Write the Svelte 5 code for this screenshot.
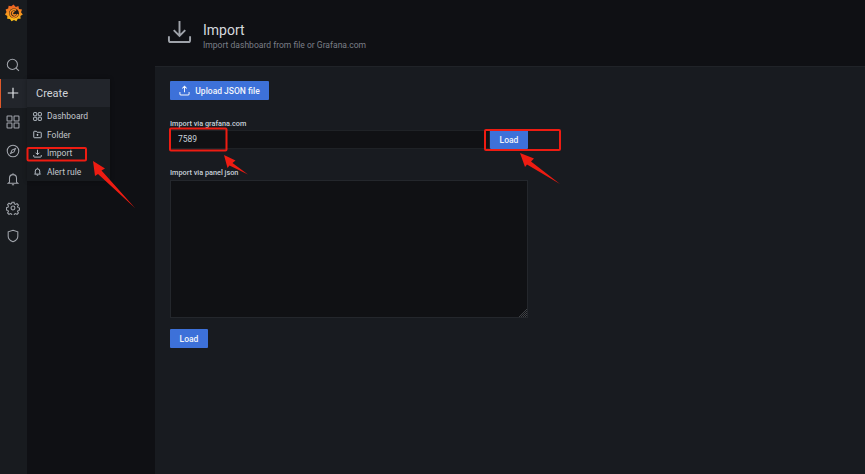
<script lang="ts">
	const menu = [
		{ label: 'Dashboard', icon: 'grid' },
		{ label: 'Folder', icon: 'folder' },
		{ label: 'Import', icon: 'import' },
		{ label: 'Alert rule', icon: 'bell' }
	];
</script>

<div class="app">
	<nav class="sidebar">
		<div class="logo">
			<svg width="18" height="18" viewBox="0 0 18 18">
				<defs>
					<linearGradient id="flame" x1="0" y1="1" x2="0" y2="0">
						<stop offset="0" stop-color="#fcc419" />
						<stop offset="1" stop-color="#ee5a24" />
					</linearGradient>
				</defs>
				<path
					fill="url(#flame)"
					d="M8.500.5 10.800 3l2.600-1 .6 2.900 3 .6-1 2.700 1.800 2.200-2.400 1.500.2 2.800-2.800.1-1.400 2.500-2.400-1.300-2.500 1.300-1.500-2.400-2.800-.2.100-2.700L0 10.500l1.500-2.400L.6 5.500l2.600-1 .4-2.800 2.700.6z"
				/>
				<circle cx="9" cy="9.300" r="4.900" fill="#1d1a1a" />
				<path
					d="M12.700 10a3.800 3.800 0 1 1-1.500-3.700M10.700 10.200a1.800 1.800 0 1 1-1.200-2.700"
					fill="none"
					stroke="#f68b1f"
					stroke-width="1.500"
				/>
			</svg>
		</div>
		<div class="nav-icons">
			<div class="nav-item">
				<svg class="ic" viewBox="0 0 16 16"><circle cx="7.300" cy="7.300" r="5.800" /><path d="m11.500 11.500 3.300 3.300" /></svg>
			</div>
			<div class="nav-item active">
				<svg class="ic plus" viewBox="0 0 16 16"><path d="M8 2v12M2 8h12" /></svg>
			</div>
			<div class="nav-item">
				<svg class="ic" viewBox="0 0 16 16">
					<rect x="1.200" y="1.200" width="5.600" height="5.600" rx=".6" />
					<rect x="9.200" y="1.200" width="5.600" height="5.600" rx=".6" />
					<rect x="1.200" y="9.200" width="5.600" height="5.600" rx=".6" />
					<rect x="9.200" y="9.200" width="5.600" height="5.600" rx=".6" />
				</svg>
			</div>
			<div class="nav-item">
				<svg class="ic" viewBox="0 0 16 16"><circle cx="8" cy="8" r="6.600" /><path d="m10.800 5.200-1.700 3.900-3.900 1.700 1.700-3.900z" /></svg>
			</div>
			<div class="nav-item">
				<svg class="ic" viewBox="0 0 16 16"><path d="M4 11.500V7a4 4 0 0 1 8 0v4.500l1.500 1.300h-11zM6.700 14.500h2.600M8 1.500V3" /></svg>
			</div>
			<div class="nav-item">
				<svg class="ic" viewBox="0 0 16 16">
					<circle cx="8" cy="8" r="2.200" />
					<path d="M6.800 1.500h2.400l.4 1.900 1.300.6 1.700-1 1.600 1.700-1 1.600.6 1.300 1.700.4v2.300l-1.700.4-.6 1.300 1 1.600-1.600 1.700-1.700-1-1.300.6-.4 1.600H6.800l-.4-1.600-1.300-.6-1.700 1-1.600-1.700 1-1.600-.6-1.300-1.700-.4V7.500l1.700-.4.6-1.300-1-1.600 1.600-1.700 1.700 1 1.300-.6z" />
				</svg>
			</div>
			<div class="nav-item">
				<svg class="ic" viewBox="0 0 16 16"><path d="M8 1.500 13.500 3.200v5c0 3-2.500 5.200-5.500 6.300-3-1.100-5.500-3.300-5.500-6.300v-5z" /></svg>
			</div>
		</div>
	</nav>

	<div class="main">
		<header class="page-header">
			<svg class="header-icon" viewBox="0 0 26 26">
				<path d="M13 2v15M7 11.500l6 6 6-6M2 18v4a2 2 0 0 0 2 2h18a2 2 0 0 0 2-2v-4" />
			</svg>
			<div>
				<h1>Import</h1>
				<p>Import dashboard from file or Grafana.com</p>
			</div>
		</header>

		<section class="content">
			<button class="btn upload">
				<svg width="11" height="11" viewBox="0 0 12 12"><path d="M6 8V1.500M3.500 3.800 6 1.300l2.500 2.500M1 7.500v2.300a1 1 0 0 0 1 1h8a1 1 0 0 0 1-1V7.500" /></svg>
				Upload JSON file
			</button>

			<div class="label first">Import via grafana.com</div>
			<div class="row">
				<div class="input">7589</div>
				<button class="btn">Load</button>
			</div>

			<div class="label second">Import via panel json</div>
			<div class="textarea">
				<svg class="grip" width="9" height="9" viewBox="0 0 9 9"><path d="M9 1 1 9M9 3 3 9M9 5 5 9M9 7 7 9" /></svg>
			</div>

			<button class="btn last">Load</button>
		</section>
	</div>

	<div class="flyout">
		<div class="flyout-title">Create</div>
		<ul>
			{#each menu as item}
				<li>
					<svg class="mi" viewBox="0 0 12 12">
						{#if item.icon === 'grid'}
							<rect x=".8" y=".8" width="4.200" height="4.200" rx=".8" />
							<rect x="7" y=".8" width="4.200" height="4.200" rx=".8" />
							<rect x=".8" y="7" width="4.200" height="4.200" rx=".8" />
							<rect x="7" y="7" width="4.200" height="4.200" rx=".8" />
						{:else if item.icon === 'folder'}
							<path d="M1 2.500a.8.800 0 0 1 .8-.8h2.700l1 1.300h4.700a.8.800 0 0 1 .8.800v5.700a.8.800 0 0 1-.8.800H1.800a.8.800 0 0 1-.8-.8z" />
							<path d="M6 5.200v2.600M4.700 6.500h2.600" />
						{:else if item.icon === 'import'}
							<path d="M6 1v6.500M3.500 5 6 7.500 8.500 5M1 8v1.800a1 1 0 0 0 1 1h8a1 1 0 0 0 1-1V8" />
						{:else}
							<path d="M3 8.500V5.500a3 3 0 0 1 6 0v3l1 1H2zM5 11h2M6 1v1" />
						{/if}
					</svg>
					{item.label}
				</li>
			{/each}
		</ul>
	</div>

	<!-- screenshot annotations -->
	<svg class="marks" width="865" height="474" viewBox="0 0 865 474">
		<g fill="none" stroke="#ee1c12" stroke-width="2">
			<rect x="27.500" y="148" width="58.500" height="12.500" rx="1" />
			<rect x="170" y="128.500" width="56.500" height="22" rx="1" />
			<rect x="485" y="130" width="75" height="20" rx="1" />
		</g>
		<g fill="#ee1c12">
			<path d="M93 161 105 168.500 101.500 170.500 135 208 98 174 95 176z" />
			<path d="M224 155 235.500 160.500 232.500 163 248 174.500 229.500 165.500 227.500 168z" />
			<path d="M520 153 534 158.500 531 161.500 560 184 527 164.500 525 167z" />
		</g>
	</svg>
</div>

<style>
	:global(body) {
		margin: 0;
		background: #0f1014;
	}

	.app {
		position: relative;
		display: flex;
		width: 865px;
		height: 474px;
		overflow: hidden;
		background: #0f1014;
		font-family: Roboto, 'Liberation Sans', sans-serif;
		color: #c7d0d9;
	}

	.sidebar {
		width: 27px;
		flex: none;
		background: #181b1f;
	}

	.logo {
		display: flex;
		justify-content: center;
		height: 50.500px;
		padding-top: 4px;
		box-sizing: border-box;
	}

	.nav-icons {
		display: flex;
		flex-direction: column;
	}

	.nav-item {
		display: flex;
		align-items: center;
		justify-content: center;
		height: 28.600px;
		padding-right: 2px;
		box-sizing: border-box;
	}

	.nav-item.active {
		background: #22252b;
		box-shadow: inset 1px 0 0 #e0592a;
	}

	.ic {
		width: 14px;
		height: 14px;
		fill: none;
		stroke: #a2a6ad;
		stroke-width: 1.200;
	}

	.ic.plus {
		stroke: #dfe2e6;
		stroke-width: 1.400;
	}

	.main {
		flex: 1;
		display: flex;
		flex-direction: column;
		min-width: 0;
	}

	.page-header {
		display: flex;
		align-items: center;
		gap: 11px;
		height: 66px;
		padding: 6px 0 0 140px;
		box-sizing: border-box;
	}

	.header-icon {
		width: 25px;
		height: 25px;
		margin-top: -10px;
		fill: none;
		stroke: #9fa3aa;
		stroke-width: 2;
	}

	h1 {
		margin: 0 0 1px;
		font-size: 14px;
		line-height: 17px;
		font-weight: 400;
		color: #d5d8de;
	}

	.page-header p {
		margin: 0;
		font-size: 8.550px;
		line-height: 11px;
		color: #7b7f87;
	}

	.content {
		flex: 1;
		margin-left: 128px;
		padding: 14px 15px;
		background: #181b20;
		border-top: 1px solid #202328;
		box-sizing: border-box;
		display: flex;
		flex-direction: column;
		align-items: flex-start;
	}

	.btn {
		display: inline-flex;
		align-items: center;
		justify-content: center;
		gap: 5px;
		height: 19px;
		width: 38px;
		padding: 0;
		border: 0;
		border-radius: 1px;
		background: #3d71d9;
		color: #f2f5fb;
		font-family: inherit;
		font-size: 8.500px;
		font-weight: 500;
	}

	.btn svg {
		fill: none;
		stroke: #f2f5fb;
		stroke-width: 1.100;
	}

	.upload {
		width: 99px;
	}

	.label {
		font-size: 7.300px;
		font-weight: 500;
		line-height: 9px;
		color: #c7d0d9;
	}

	.label.first {
		margin-top: 19px;
		margin-bottom: 2px;
	}

	.label.second {
		margin-top: 19px;
		margin-bottom: 3px;
	}

	.row {
		display: flex;
		width: 358px;
		gap: 0;
	}

	.input {
		flex: 1;
		height: 19px;
		box-sizing: border-box;
		padding-left: 7px;
		background: #101114;
		border: 1px solid #1f2226;
		font-size: 8.500px;
		line-height: 17px;
		color: #c7d0d9;
	}

	.textarea {
		position: relative;
		width: 358px;
		height: 138px;
		box-sizing: border-box;
		background: #101114;
		border: 1px solid #24272c;
	}

	.grip {
		position: absolute;
		right: 0;
		bottom: 0;
		fill: none;
		stroke: #54575c;
		stroke-width: 0.700;
	}

	.last {
		margin-top: 11px;
	}

	.flyout {
		position: absolute;
		left: 27px;
		top: 79px;
		width: 83px;
		background: #181b1f;
		box-shadow: 0 0 4px rgba(0, 0, 0, 0.3);
	}

	.flyout-title {
		height: 28px;
		padding-left: 9px;
		background: #22252b;
		font-size: 11px;
		line-height: 29px;
		color: #d0d3d9;
	}

	ul {
		margin: 0;
		padding: 0 0 0 6px;
		list-style: none;
	}

	li {
		display: flex;
		align-items: center;
		gap: 5px;
		height: 18.500px;
		font-size: 8.500px;
		color: #c3c7cd;
	}

	.mi {
		width: 9px;
		height: 9px;
		fill: none;
		stroke: #c7d0d9;
		stroke-width: 1.200;
	}

	.marks {
		position: absolute;
		left: 0;
		top: 0;
		pointer-events: none;
	}
</style>
